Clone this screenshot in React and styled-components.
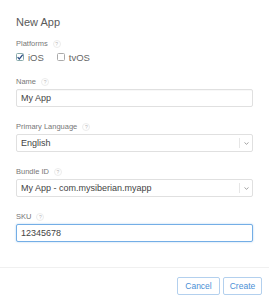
import React from 'react';
import styled, { createGlobalStyle } from 'styled-components';

const GlobalStyle = createGlobalStyle`
    html, body {
        margin: 0;
        padding: 0;
        background: #fff;
    }
    body {
        font-family: "Liberation Sans", Arial, sans-serif;
    }
`

const Help = () => <HelpMark>?</HelpMark>

const Check = ({ checked }) => (
    <svg width="8" height="8" viewBox="0 0 8 8">
        <rect x="0.5" y="0.5" width="7" height="7" rx="1" fill="#fff" stroke={checked ? '#8aa' : '#aaa'} />
        {checked && <path d="M1.6 4.1 L3.3 5.9 L6.8 1.6" fill="none" stroke="#2d4f86" strokeWidth="1.3" />}
    </svg>
)

const Arrow = () => (
    <svg width="5" height="3" viewBox="0 0 5 3">
        <path d="M0.5 0.5 L2.5 2.3 L4.5 0.5" fill="none" stroke="#999" strokeWidth="0.9" />
    </svg>
)

const Field = ({ label, children }) => (
    <FieldBox>
        <Label>{label}<Help /></Label>
        {children}
    </FieldBox>
)

const App = () => {
    return (
        <Dialog>
            <GlobalStyle />
            <Body>
                <Title>New App</Title>
                <FieldBox $gap={13}>
                    <Label>Platforms<Help /></Label>
                    <CheckRow>
                        <CheckItem><Check checked />iOS</CheckItem>
                        <CheckItem><Check />tvOS</CheckItem>
                    </CheckRow>
                </FieldBox>
                <Field label="Name">
                    <Input readOnly value="My App" />
                </Field>
                <Field label="Primary Language">
                    <Select>
                        <span>English</span>
                        <ArrowBox><Arrow /></ArrowBox>
                    </Select>
                </Field>
                <Field label="Bundle ID">
                    <Select>
                        <span>My App - com.mysiberian.myapp</span>
                        <ArrowBox><Arrow /></ArrowBox>
                    </Select>
                </Field>
                <Field label="SKU">
                    <Input readOnly value="12345678" $focused />
                </Field>
            </Body>
            <Footer>
                <Button $w={43}>Cancel</Button>
                <Button $w={39}>Create</Button>
            </Footer>
        </Dialog>
    )
}

const Dialog = styled.div`
    width: 269px;
    height: 300px;
    display: flex;
    flex-direction: column;
    background: #fff;
    box-sizing: border-box;
`

const Body = styled.div`
    padding: 15px 16px 0;
    display: flex;
    flex-direction: column;
`

const Title = styled.div`
    font-size: 11px;
    line-height: 14px;
    color: #5a5a5a;
    margin-bottom: 10px;
`

const FieldBox = styled.div`
    display: flex;
    flex-direction: column;
    margin-bottom: ${p => p.$gap ?? 15}px;
`

const Label = styled.div`
    display: flex;
    align-items: center;
    font-size: 7.5px;
    line-height: 10px;
    height: 10px;
    color: #777;
    margin-bottom: 2px;
`

const HelpMark = styled.span`
    display: inline-grid;
    place-items: center;
    width: 6px;
    height: 6px;
    margin-left: 5px;
    border: 1px solid #ececec;
    border-radius: 50%;
    font-size: 5px;
    line-height: 6px;
    color: #b8b8b8;
`

const CheckRow = styled.div`
    display: flex;
    align-items: center;
    gap: 13px;
    height: 14px;
    margin-top: -1px;
`

const CheckItem = styled.label`
    display: flex;
    align-items: center;
    gap: 4px;
    font-size: 9.5px;
    color: #666;
`

const Input = styled.input`
    box-sizing: border-box;
    width: 100%;
    height: 18px;
    margin: 0;
    padding: 0 4px;
    font-family: "Liberation Sans", Arial, sans-serif;
    font-size: 9px;
    color: #444;
    border: 1px solid ${p => p.$focused ? '#74aee6' : '#e0e0e0'};
    border-radius: 2px;
    outline: none;
    box-shadow: ${p => p.$focused ? '0 0 2px rgba(90,160,230,0.5)' : 'inset 0 1px 1px rgba(0,0,0,0.03)'};
    background: #fff;
`

const Select = styled.div`
    box-sizing: border-box;
    height: 18px;
    display: flex;
    align-items: center;
    padding-left: 4px;
    border: 1px solid #e0e0e0;
    border-radius: 2px;
    font-size: 9px;
    color: #444;
    span {
        flex: 1;
        white-space: nowrap;
        overflow: hidden;
    }
`

const ArrowBox = styled.div`
    width: 12px;
    height: 10px;
    border-left: 1px solid #e6e6e6;
    display: grid;
    place-items: center;
`

const Footer = styled.div`
    margin-top: auto;
    border-top: 1px solid #f0f0f0;
    display: flex;
    justify-content: flex-end;
    gap: 3px;
    padding: 9px 7px 5px;
`

const Button = styled.button`
    box-sizing: border-box;
    width: ${p => p.$w}px;
    height: 18px;
    padding: 0;
    background: #fff;
    border: 1px solid #b3d0ee;
    border-radius: 2px;
    font-family: "Liberation Sans", Arial, sans-serif;
    font-size: 8.5px;
    color: #4a8fd6;
    cursor: pointer;
`

export default App
